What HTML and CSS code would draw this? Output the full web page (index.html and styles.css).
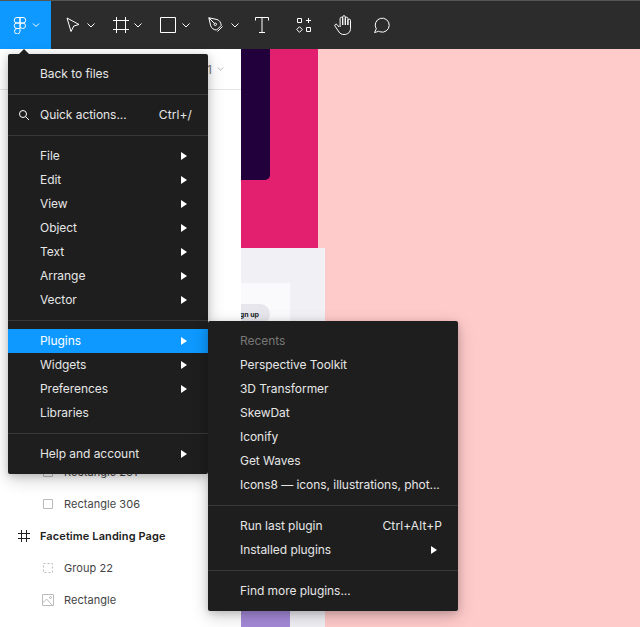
FILE: index.html
```html
<!DOCTYPE html>
<html lang="en">
<head>
    <meta charset="UTF-8">
    <title>Figma</title>
    <link rel="stylesheet" href="styles.css">
</head>
<body>
    <header class="toolbar">
        <button class="tool main-tool">
            <svg width="16" height="18" viewBox="0 0 16 18" fill="none" stroke="#fff" stroke-width="1">
                <path d="M8 1.500H5a2.750 2.750 0 0 0 0 5.500h3zM8 1.500h3a2.750 2.750 0 0 1 0 5.500H8zM8 7H5a2.750 2.750 0 0 0 0 5.500h3zM13.500 9.750a2.750 2.750 0 1 1-5.500 0a2.750 2.750 0 0 1 5.500 0zM8 12.500H5A2.750 2.750 0 1 0 8 15.250z"/>
            </svg>
            <svg class="caret" width="8" height="5" viewBox="0 0 8 5"><path d="M1 .5 4 3.500 7 .5" fill="none" stroke="#fff"/></svg>
        </button>
        <button class="tool tool-move">
            <svg width="14" height="16" viewBox="0 0 14 16" fill="none" stroke="#fff"><path d="M1 1 13 7.500 7.800 9 5 14.500z"/></svg>
            <svg class="caret" width="8" height="5" viewBox="0 0 8 5"><path d="M.5.5 4 4 7.500.5" fill="none" stroke="#fff"/></svg>
        </button>
        <button class="tool tool-frame">
            <svg width="16" height="16" viewBox="0 0 16 16" fill="none" stroke="#fff"><path d="M0 3.500h16M0 12.500h16M3.500 0v16M12.500 0v16"/></svg>
            <svg class="caret" width="8" height="5" viewBox="0 0 8 5"><path d="M.5.5 4 4 7.500.5" fill="none" stroke="#fff"/></svg>
        </button>
        <button class="tool tool-rect">
            <svg width="16" height="16" viewBox="0 0 16 16" fill="none" stroke="#fff"><path d="M.5.5h15v15H.5z"/></svg>
            <svg class="caret" width="8" height="5" viewBox="0 0 8 5"><path d="M.5.5 4 4 7.500.5" fill="none" stroke="#fff"/></svg>
        </button>
        <button class="tool tool-pen">
            <svg width="16" height="16" viewBox="0 0 16 16" fill="none" stroke="#fff"><path d="M.8.8 9 2.500c2.500.8 4 3 4.200 6l-4.500 4.500c-3 0-5.200-1.700-6-4.200zM.8.8l5.700 5.700"/><circle cx="7.300" cy="7.300" r="1.200"/><path d="m9.500 14.500 5-5"/></svg>
            <svg class="caret" width="8" height="5" viewBox="0 0 8 5"><path d="M.5.5 4 4 7.500.5" fill="none" stroke="#fff"/></svg>
        </button>
        <button class="tool tool-text">
            <svg width="14" height="16" viewBox="0 0 14 16" fill="none" stroke="#fff"><path d="M.5 3.500V.5h13v3M7 .5v15M4 15.500h6"/></svg>
        </button>
        <button class="tool tool-res">
            <svg width="16" height="16" viewBox="0 0 16 16" fill="none" stroke="#fff"><path d="M1.500 1.500h4v4h-4zM10.500 10.500h4v4h-4zM12.500 1v5M10 3.500h5M3.500 9.700l2.800 2.800-2.800 2.800-2.800-2.800z"/></svg>
        </button>
        <button class="tool tool-hand">
            <svg width="18" height="20" viewBox="0 0 18 20" fill="none" stroke="#fff"><path d="M5 12 3 9.500a1.300 1.300 0 0 0-2 1.600L5 17c1 1.500 2.500 2.500 5 2.500 4 0 6.500-2.500 6.500-6V5.500a1.300 1.300 0 0 0-2.600 0V10 3.500a1.300 1.300 0 0 0-2.600 0V10 2a1.300 1.300 0 0 0-2.600 0v8-6.500a1.300 1.300 0 0 0-2.600 0V12"/></svg>
        </button>
        <button class="tool tool-comment">
            <svg width="18" height="18" viewBox="0 0 18 18" fill="none" stroke="#fff"><path d="M1.500 16.500l1.800-3.600A7 7 0 1 1 7 15.800a7 7 0 0 1-1.500-.6 14 14 0 0 1-4 1.300z"/></svg>
        </button>
    </header>

    <div class="workspace">
        <aside class="sidebar">
            <div class="page-bar">
                <span class="page-num">1</span>
                <svg width="7" height="4" viewBox="0 0 8 5"><path d="M.5.5 4 4 7.500.5" fill="none" stroke="#aaa"/></svg>
            </div>
            <ul class="layers">
                <li class="layer child">
                    <svg width="12" height="12" viewBox="0 0 12 12" fill="none" stroke="#bbb"><path d="M1.500 1.500h9v9h-9z"/></svg>
                    Rectangle 261
                </li>
                <li class="layer child">
                    <svg width="12" height="12" viewBox="0 0 12 12" fill="none" stroke="#bbb"><path d="M1.500 1.500h9v9h-9z"/></svg>
                    Rectangle 306
                </li>
                <li class="layer frame-row">
                    <svg width="12" height="12" viewBox="0 0 12 12" fill="none" stroke="#222"><path d="M0 3.500h12M0 8.500h12M3.500 0v12M8.500 0v12"/></svg>
                    Facetime Landing Page
                </li>
                <li class="layer child">
                    <svg width="12" height="12" viewBox="0 0 12 12" fill="none" stroke="#bbb" stroke-dasharray="2 2"><path d="M1.500 1.500h9v9h-9z"/></svg>
                    Group 22
                </li>
                <li class="layer child">
                    <svg width="12" height="12" viewBox="0 0 12 12" fill="none" stroke="#bbb"><path d="M.5.5h11v11H.5zM.5 9l4-4 6 6.500"/><circle cx="8.500" cy="3.500" r="1"/></svg>
                    Rectangle
                </li>
            </ul>
        </aside>

        <!-- canvas shapes sit at free positions -->
        <main class="canvas">
            <div class="shape pink-panel"></div>
            <div class="shape dark-panel"></div>
            <div class="shape grey-panel"></div>
            <div class="shape white-panel"></div>
            <div class="shape signup">gn up</div>
            <div class="shape purple-panel"></div>
        </main>
    </div>

    <nav class="menu main-menu">
        <div class="menu-item">Back to files</div>
        <hr>
        <div class="menu-item">
            <svg class="search-icon" width="12" height="12" viewBox="0 0 12 12" fill="none" stroke="#fff"><circle cx="5" cy="5" r="3.500"/><path d="m7.500 7.500 3.500 3.500"/></svg>
            Quick actions...
            <span class="shortcut">Ctrl+/</span>
        </div>
        <hr>
        <div class="menu-item arrow">File</div>
        <div class="menu-item arrow">Edit</div>
        <div class="menu-item arrow">View</div>
        <div class="menu-item arrow">Object</div>
        <div class="menu-item arrow">Text</div>
        <div class="menu-item arrow">Arrange</div>
        <div class="menu-item arrow">Vector</div>
        <hr>
        <div class="menu-item arrow active">Plugins</div>
        <div class="menu-item arrow">Widgets</div>
        <div class="menu-item arrow">Preferences</div>
        <div class="menu-item">Libraries</div>
        <hr>
        <div class="menu-item arrow">Help and account</div>
    </nav>

    <nav class="menu sub-menu">
        <div class="menu-item muted">Recents</div>
        <div class="menu-item">Perspective Toolkit</div>
        <div class="menu-item">3D Transformer</div>
        <div class="menu-item">SkewDat</div>
        <div class="menu-item">Iconify</div>
        <div class="menu-item">Get Waves</div>
        <div class="menu-item">Icons8 — icons, illustrations, phot...</div>
        <hr>
        <div class="menu-item">Run last plugin <span class="shortcut">Ctrl+Alt+P</span></div>
        <div class="menu-item arrow">Installed plugins</div>
        <hr>
        <div class="menu-item">Find more plugins...</div>
    </nav>
</body>
</html>
```

FILE: styles.css
```css
* {
    box-sizing: border-box;
}

html, body {
    height: 100%;
}

body {
    margin: 0;
    height: 627px;
    overflow: hidden;
    display: flex;
    flex-direction: column;
    font-family: Inter, "Liberation Sans", sans-serif;
    font-size: 12px;
    background: #ffcaca;
}

/* toolbar */
.toolbar {
    height: 49px;
    flex: none;
    display: flex;
    background: #2c2c2c;
    border-top: 1px solid #555;
}

.tool {
    height: 48px;
    padding: 0;
    border: 0;
    background: none;
    display: flex;
    align-items: center;
    justify-content: center;
}

.caret {
    flex: none;
}

.main-tool {
    width: 51px;
    justify-content: flex-start;
    gap: 4px;
    padding-left: 12px;
    background: #0d99ff;
}

.tool-move {
    width: 47px;
    justify-content: flex-start;
    gap: 7px;
    padding-left: 15px;
}

.tool-frame {
    width: 49px;
    justify-content: flex-start;
    gap: 5px;
    padding-left: 15px;
}

.tool-rect {
    width: 47px;
    justify-content: flex-start;
    gap: 6px;
    padding-left: 13px;
}

.tool-pen {
    width: 48px;
    justify-content: flex-start;
    gap: 7px;
    padding-left: 14px;
}

.tool-text { width: 40px; }
.tool-res { width: 43px; }
.tool-hand { width: 35px; }
.tool-comment { width: 44px; }

/* sidebar and canvas */
.workspace {
    flex: 1;
    display: flex;
    min-height: 0;
}

.sidebar {
    width: 241px;
    flex: none;
    display: flex;
    flex-direction: column;
    background: #fff;
}

.page-bar {
    height: 41px;
    flex: none;
    display: flex;
    align-items: center;
    justify-content: flex-end;
    gap: 5px;
    padding-right: 17px;
    color: #777;
    border-bottom: 1px solid #e5e5e5;
}

.layers {
    list-style: none;
    margin: auto 0 0;
    padding: 0 0 11px;
}

.layer {
    height: 32px;
    display: flex;
    align-items: center;
    gap: 10px;
    font-size: 11px;
    letter-spacing: .05px;
    color: #444;
}

.layer svg {
    flex: none;
}

.child {
    padding-left: 42px;
}

.frame-row {
    padding-left: 18px;
    font-weight: 600;
    letter-spacing: .1px;
    color: #222;
}

.canvas {
    flex: 1;
    position: relative;
    overflow: hidden;
}

.shape {
    position: absolute;
}

.pink-panel {
    left: 0;
    top: 0;
    width: 77px;
    height: 199px;
    background: #e31f6f;
}

.dark-panel {
    left: 0;
    top: 0;
    width: 29px;
    height: 131px;
    border-radius: 0 0 5px 0;
    background: #21003b;
}

.grey-panel {
    left: 0;
    top: 199px;
    width: 84px;
    height: 379px;
    background: #f0f0f5;
}

.white-panel {
    left: 0;
    top: 234px;
    width: 49px;
    height: 344px;
    background: #fafafc;
}

.signup {
    left: -30px;
    top: 255px;
    width: 59px;
    height: 20px;
    padding-right: 11px;
    border-radius: 10px;
    display: flex;
    align-items: center;
    justify-content: flex-end;
    font-size: 7px;
    font-weight: 700;
    color: #222;
    background: #e6e6ec;
}

.purple-panel {
    left: 0;
    top: 562px;
    width: 49px;
    height: 16px;
    background: #a58ad8;
}

/* menus */
.menu {
    position: absolute;
    padding: 8px 0;
    color: #fff;
    background: #1e1e1e;
    border-radius: 2px;
    box-shadow: 0 5px 17px rgba(0, 0, 0, .2), 0 2px 7px rgba(0, 0, 0, .15);
}

.main-menu {
    left: 8px;
    top: 54px;
    width: 200px;
}

.main-menu::before {
    content: "";
    position: absolute;
    left: 11px;
    top: -5px;
    border: 5px solid transparent;
    border-top: 0;
    border-bottom-color: #1e1e1e;
}

.sub-menu {
    left: 208px;
    top: 321px;
    width: 250px;
}

.menu hr {
    margin: 8px 0;
    border: 0;
    height: 1px;
    background: #383838;
}

.menu-item {
    position: relative;
    height: 24px;
    display: flex;
    align-items: center;
    justify-content: space-between;
    padding: 0 16px 2px 32px;
    white-space: nowrap;
    letter-spacing: -.05px;
    color: #e6e6e6;
}

.menu-item.arrow::after {
    content: "";
    position: absolute;
    right: 21px;
    top: 8px;
    border-left: 6px solid #fff;
    border-top: 4px solid transparent;
    border-bottom: 4px solid transparent;
}

.active {
    color: #fff;
    background: #0d99ff;
}

.muted {
    color: #777;
}

.search-icon {
    position: absolute;
    left: 10px;
    top: 6px;
}

.shortcut {
    letter-spacing: .1px;
    color: #e6e6e6;
}
```
